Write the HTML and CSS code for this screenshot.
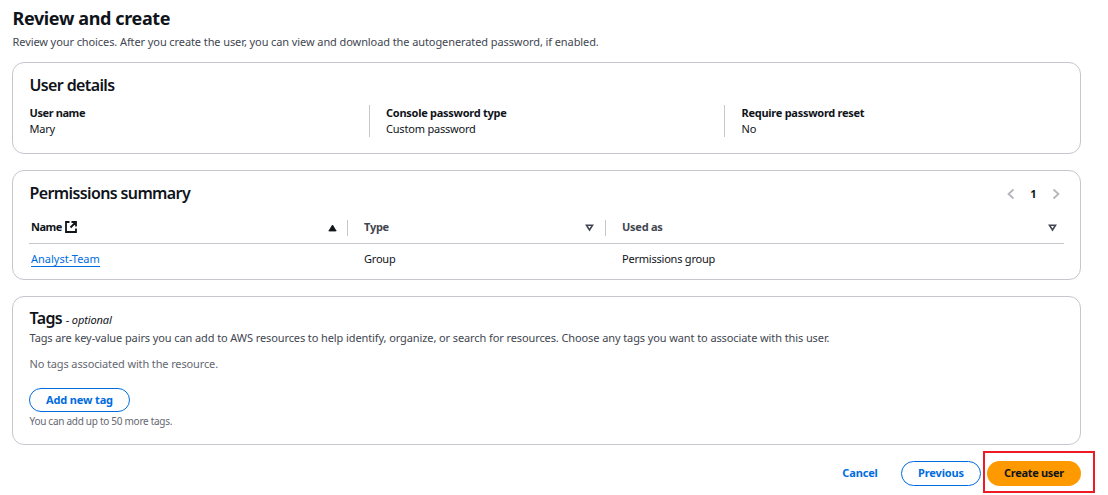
FILE: index.html
```html
<!DOCTYPE html>
<html lang="en">
<head>
<meta charset="utf-8">
<title>Review and create</title>
<link rel="stylesheet" href="styles.css">
</head>
<body>
<main class="page">
  <header class="page-header">
    <h1 class="page-title">Review and create</h1>
    <p class="page-desc">Review your choices. After you create the user, you can view and download the autogenerated password, if enabled.</p>
  </header>

  <section class="card card-details">
    <h2 class="card-title">User details</h2>
    <dl class="details">
      <div class="detail"><dt>User name</dt><dd>Mary</dd></div>
      <div class="detail"><dt>Console password type</dt><dd>Custom password</dd></div>
      <div class="detail"><dt>Require password reset</dt><dd>No</dd></div>
    </dl>
  </section>

  <section class="card card-permissions">
    <div class="card-head">
      <h2 class="card-title">Permissions summary</h2>
      <nav class="pagination">
        <svg class="chevron" viewBox="0 0 10 12"><path d="M7.5 1.5 2.5 6l5 4.5"/></svg>
        <span class="page-number">1</span>
        <svg class="chevron" viewBox="0 0 10 12"><path d="M2.5 1.5l5 4.5-5 4.5"/></svg>
      </nav>
    </div>
    <div class="table">
      <div class="row row-head">
        <div class="th th-active">
          <span>Name</span>
          <svg class="external" viewBox="0 0 12 12"><path d="M4.5 1H1v10h10V7.5M6.5 1H11v4.5M11 1 5.5 6.5"/></svg>
          <svg class="sort sort-asc" viewBox="0 0 9 8"><path d="M4.5 1 8.2 7H.8z"/></svg>
        </div>
        <div class="th th-type"><span>Type</span><svg class="sort" viewBox="0 0 9 8"><path d="M1.5 1.3h6L4.5 6z"/></svg></div>
        <div class="th"><span>Used as</span><svg class="sort" viewBox="0 0 9 8"><path d="M1.5 1.3h6L4.5 6z"/></svg></div>
      </div>
      <div class="row row-body">
        <div class="td"><a class="link">Analyst-Team</a></div>
        <div class="td">Group</div>
        <div class="td">Permissions group</div>
      </div>
    </div>
  </section>

  <section class="card card-tags">
    <h2 class="card-title">Tags <span class="optional">- <i>optional</i></span></h2>
    <p class="tags-desc">Tags are key-value pairs you can add to AWS resources to help identify, organize, or search for resources. Choose any tags you want to associate with this user.</p>
    <p class="tags-empty">No tags associated with the resource.</p>
    <button class="btn btn-tag">Add new tag</button>
    <p class="tags-hint">You can add up to 50 more tags.</p>
  </section>

  <footer class="actions">
    <button class="btn btn-link">Cancel</button>
    <button class="btn btn-previous">Previous</button>
    <div class="highlight"><button class="btn btn-primary">Create user</button></div>
  </footer>
</main>
</body>
</html>
```

FILE: styles.css
```css
* { box-sizing: border-box; margin: 0; padding: 0; }

body {
  width: 1108px;
  height: 495px;
  overflow: hidden;
  background: #fff;
  color: #0f141a;
  font: 11px/16px "Noto Sans", "Open Sans", sans-serif;
}

.page { padding: 7px 0 0 12px; width: 1108px; }
.page-header { height: 55px; padding-left: 0.5px; }
.page-title { font-size: 18px; line-height: 22px; font-weight: 700; letter-spacing: -0.37px; }
.page-desc { margin-top: 5px; color: #424650; letter-spacing: -0.09px; }

.card {
  width: 1069px;
  margin-bottom: 16px;
  padding: 0 16px;
  border: 1px solid #c6c6cd;
  border-radius: 12px;
}
.card-title { padding-left: 0.5px; font-size: 16px; line-height: 20px; font-weight: 600; letter-spacing: -0.62px; }

.card-details { height: 92px; padding-top: 12px; }
.details { display: grid; grid-template-columns: 340px 355px 1fr; margin-top: 10px; }
.detail { height: 32px; padding-left: 0.5px; }
.detail + .detail { padding-left: 16px; border-left: 1px solid #c6c6cd; }
.detail:last-child { padding-left: 16.5px; }
dt { font-weight: 700; letter-spacing: -0.27px; }
.detail:first-child dt { letter-spacing: -0.4px; }
dd { letter-spacing: -0.2px; }

.card-permissions { height: 110px; padding-top: 12px; }
.card-head { display: flex; justify-content: space-between; }
.pagination { display: flex; align-items: center; gap: 14.5px; padding-right: 3px; height: 21px; }
.page-number { font-weight: 700; }
.chevron { width: 10px; height: 12px; fill: none; stroke: #b4b4bb; stroke-width: 1.7; }
.row { display: grid; grid-template-columns: 318px 258px 1fr; }
.row-head { margin-top: 16px; height: 24px; border-bottom: 1px solid #c6c6cd; }
.th { display: flex; align-items: center; height: 16px; color: #424650; font-weight: 700; letter-spacing: -0.25px; padding: 0 7px 0 16px; }
.th span { margin-top: -2px; }
.th + .th { border-left: 1px solid #c6c6cd; }
.th-active { padding: 0 10px 0 2px; color: #0f141a; letter-spacing: -0.5px; }
.th-type { padding-right: 11px; }
.external { width: 12px; height: 12px; margin-left: 3px; margin-top: -2px; fill: none; stroke: #0f141a; stroke-width: 1.8; }
.sort { width: 9px; height: 8px; margin-left: auto; margin-top: -1px; fill: none; stroke: #424650; stroke-width: 1.6; }
.sort-asc { fill: #0f141a; stroke: #0f141a; stroke-width: .8; }
.row-body { height: 32px; padding-top: 7px; }
.td { padding-left: 17px; letter-spacing: -0.22px; }
.td:first-child { padding-left: 2px; letter-spacing: 0; }
.link { display: inline-block; height: 16px; color: #006ce0; border-bottom: 1px solid #006ce0; }

.card-tags { height: 149px; padding-top: 11px; margin-bottom: 6px; }
.optional { font-size: 11px; font-weight: 400; letter-spacing: -0.1px; }
.tags-desc { padding-left: 0.5px; color: #424650; letter-spacing: -0.1px; }
.tags-empty { padding-left: 0.5px; margin-top: 10px; color: #656871; letter-spacing: -0.13px; }
.tags-hint { padding-left: 0.5px; margin-top: 1px; color: #656871; font-size: 10px; letter-spacing: -0.28px; }

.btn {
  display: block;
  height: 24px;
  padding-bottom: 1px;
  border: 1.5px solid #006ce0;
  border-radius: 13px;
  background: #fff;
  color: #006ce0;
  font: 700 11px/16px "Noto Sans", "Open Sans", sans-serif;
  letter-spacing: -0.15px;
}
.btn-tag { width: 101px; margin-top: 16px; }
.actions { display: flex; align-items: center; justify-content: flex-end; width: 1083px; height: 42px; }
.btn-link { width: 60px; margin-top: 3px; border: 0; }
.btn-previous { width: 80px; height: 25px; margin: 2px 2px 0 11px; padding-bottom: 0; }
.highlight { width: 112px; height: 42px; padding: 8px 0 0 2px; border: 2px solid #ed1c24; flex: none; }
.btn-primary { width: 94px; height: 25px; border: 0; background: #ff9900; color: #0f141a; letter-spacing: -0.3px; }
```
